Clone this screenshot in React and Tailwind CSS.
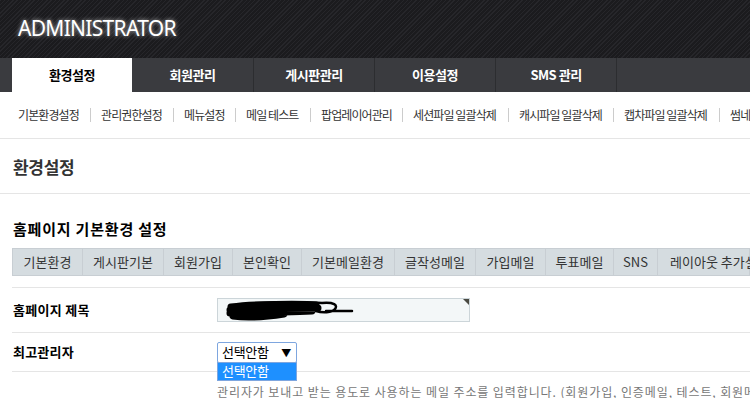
import React from "react";

const KR = '[font-family:"Noto_Sans_CJK_KR","Noto_Sans",sans-serif]';

const navTabs = ["회원관리", "게시판관리", "이용설정", "SMS 관리"];

const subItems = [
  ["기본환경설정", 72],
  ["관리권한설정", 72],
  ["메뉴설정", 51],
  ["메일 테스트", 64],
  ["팝업레이어관리", 81],
  ["세션파일 일괄삭제", 95],
  ["캐시파일 일괄삭제", 94],
  ["캡차파일 일괄삭제", 95],
  ["썸네일파일 일괄삭제", 120],
];

const tabs = [
  ["기본환경", 69],
  ["게시판기본", 81],
  ["회원가입", 69],
  ["본인확인", 69],
  ["기본메일환경", 93],
  ["글작성메일", 81],
  ["가입메일", 70],
  ["투표메일", 68],
  ["SNS", 44],
  ["레이아웃 추가설정", 130],
];

export default function App() {
  return (
    <div className={`w-[750px] h-[398px] overflow-hidden bg-white ${KR}`}>
      {/* Header */}
      <div className="h-[58px] bg-[repeating-linear-gradient(135deg,#26262a_0px,#26262a_1px,#1b1b1e_1px,#1b1b1e_3px)] flex items-center pl-[18px]">
        <span className="text-white text-[21px] tracking-[-0.7px] leading-none [font-family:'Noto_Sans',sans-serif] [text-shadow:0_0_4px_rgba(255,255,255,0.7)] -mt-[2px]">
          ADMINISTRATOR
        </span>
      </div>
      {/* Nav */}
      <div className="h-[34px] bg-[#3a3b3f] flex pl-[12px]">
        <div className="w-[120px] bg-white flex items-center justify-center text-[13px] font-bold text-black tracking-[-0.5px]">
          환경설정
        </div>
        {navTabs.map((t, i) => (
          <div
            key={t}
            className={`w-[121px] flex items-center justify-center text-[13px] font-bold text-white tracking-[-0.5px] ${i > 0 ? "border-l border-[#2c2d30]" : ""}`}
          >
            {t}
          </div>
        ))}
        <div className="w-[1px] bg-[#2c2d30]" />
      </div>
      {/* Sub menu */}
      <div className="h-[47px] border-b border-[#e5e5e5] flex items-center pl-[18px] whitespace-nowrap">
        {subItems.map(([t, w], i) => (
          <div key={t} className="flex items-center shrink-0">
            <div style={{ width: w }} className="text-[12px] text-[#333] tracking-[-0.9px]">
              {t}
            </div>
            {i < subItems.length - 1 && (
              <div className="w-[1px] h-[14px] bg-[#cccccc] mr-[10px]" />
            )}
          </div>
        ))}
      </div>
      {/* Page title */}
      <div className="h-[55px] border-b border-[#e5e5e5] flex items-center pl-[13px]">
        <h1 className="text-[17px] font-bold text-[#333] tracking-[-0.3px] mt-[1px]">환경설정</h1>
      </div>
      {/* Section */}
      <div className="pl-[12px]">
        <h2 className="h-[54px] flex items-end pb-[8px] pl-[1px] text-[15px] font-bold text-black tracking-[0.8px]">
          홈페이지 기본환경 설정
        </h2>
        <div className="h-[28px] flex bg-[#d5dce0] border border-[#c8ced3] whitespace-nowrap">
          {tabs.map(([t, w], i) => (
            <div
              key={t}
              style={{ width: w }}
              className={`shrink-0 flex items-center text-[13px] text-[#333] tracking-[0px] ${i === tabs.length - 1 ? "justify-start pl-[12px]" : "justify-center"} ${i > 0 ? "border-l border-[#c8ced3]" : ""}`}
            >
              {t}
            </div>
          ))}
        </div>
        <div className="h-[11px]" />
        {/* Row 1 */}
        <div className="h-[45px] border-t border-[#e5e5e5] flex items-center">
          <div className="w-[205px] pl-[1px] text-[13px] font-bold text-black tracking-[0.3px]">홈페이지 제목</div>
          <div className="relative w-[253px] h-[24px] bg-[#f3f7f8] border border-[#ccd5d9] mt-[-1px]">
            <div className="absolute right-0 top-0 w-0 h-0 border-t-[6px] border-l-[6px] border-t-[#4a4a42] border-l-transparent" />
            <svg className="absolute left-[6px] top-[0px]" width="130" height="22" viewBox="0 0 130 22">
              <path d="M8 7 C 30 3, 70 2, 98 4 C 110 3, 114 6, 111 10 C 108 14, 98 14, 92 12 M 102 12 L 128 12" stroke="black" strokeWidth="2.5" fill="none" strokeLinecap="round" />
              <path d="M7 8 C 30 5, 60 5, 92 6 M 6 11 C 30 9, 60 9, 94 9 M 6 14 C 25 15, 55 13, 88 12 M 9 17 C 22 19, 40 18, 60 15" stroke="black" strokeWidth="7" fill="none" strokeLinecap="round" />
            </svg>
          </div>
        </div>
        {/* Row 2 */}
        <div className="relative h-[40px] border-t border-b border-[#e5e5e5] flex items-center">
          <div className="w-[205px] pl-[1px] text-[13px] font-bold text-black tracking-[0.2px]">최고관리자</div>
          <div className="relative">
            <div className="w-[80px] h-[21px] border border-[#7ea6df] rounded-[2px] flex items-center justify-between pl-[4px] pr-[5px] text-[13px] text-black tracking-[-0.3px] bg-white">
              <span>선택안함</span>
              <span className="text-[10px]">▼</span>
            </div>
            <div className="absolute left-0 top-[20px] w-[80px] h-[19px] bg-[#1e90ff] border border-[#7ea6df] flex items-center pl-[4px] text-[13px] text-white tracking-[-0.3px] z-10">
              선택안함
            </div>
          </div>
        </div>
        <div className="pl-[205px] pt-[11px] text-[12px] text-[#777] whitespace-nowrap tracking-[0.9px]">
          관리자가 보내고 받는 용도로 사용하는 메일 주소를 입력합니다. (회원가입, 인증메일, 테스트, 회원메일발송 등에서 사용)
        </div>
      </div>
    </div>
  );
}
